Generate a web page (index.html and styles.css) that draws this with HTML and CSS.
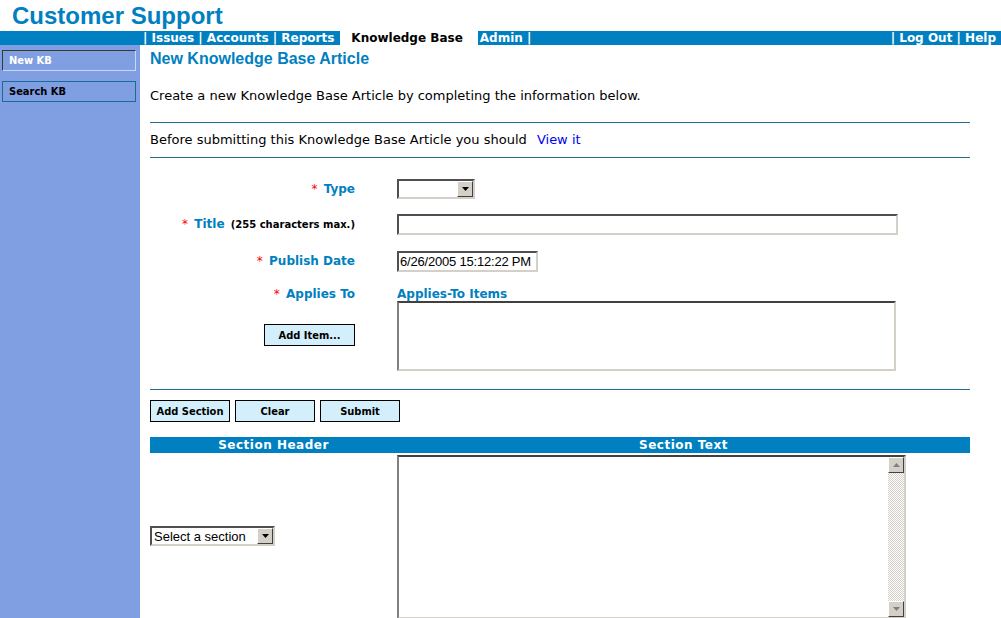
FILE: index.html
```html
<!DOCTYPE html>
<html>
<head>
<meta charset="utf-8">
<title>Customer Support</title>
<link rel="stylesheet" href="styles.css">
</head>
<body>
<header class="brand">Customer Support</header>
<nav class="topnav">
  <div class="nav-left">
    <span class="nav-item">| Issues | Accounts | Reports</span>
    <span class="nav-item nav-current">Knowledge Base</span>
    <span class="nav-item nav-admin">Admin |</span>
  </div>
  <div class="nav-right">
    <span class="nav-item">| Log Out | Help</span>
  </div>
</nav>
<div class="layout">
  <aside class="sidebar">
    <a class="side-btn side-active">New KB</a>
    <a class="side-btn">Search KB</a>
  </aside>
  <main class="content">
    <h1 class="page-title">New Knowledge Base Article</h1>
    <p class="intro">Create a new Knowledge Base Article by completing the information below.</p>
    <div class="rule rule-top"></div>
    <p class="notice">Before submitting this Knowledge Base Article you should <a class="link">View it</a></p>
    <div class="rule rule-mid"></div>

    <div class="form">
      <div class="label row-type"><span class="req">*</span> Type</div>
      <div class="control row-type">
        <span class="combo combo-type"><select class="combo-select"><option></option></select><span class="combo-btn"><svg width="7" height="4" viewBox="0 0 7 4"><path d="M0 0h7L3.5 4z" fill="#000"/></svg></span></span>
      </div>

      <div class="label row-title"><span class="req">*</span> Title <small class="hint">(255 characters max.)</small></div>
      <div class="control row-title"><input class="field field-title" type="text"></div>

      <div class="label row-date"><span class="req">*</span> Publish Date</div>
      <div class="control row-date"><input class="field field-date" type="text" value="6/26/2005 15:12:22 PM"></div>

      <div class="label label-applies"><span class="req">*</span> Applies To
        <button class="btn btn-add" type="button">Add Item...</button>
      </div>
      <div class="control applies">
        <div class="applies-head">Applies-To Items</div>
        <div class="listbox"></div>
      </div>
    </div>

    <div class="rule rule-low"></div>

    <div class="actions">
      <button class="btn btn-action" type="button">Add Section</button>
      <button class="btn btn-action" type="button">Clear</button>
      <button class="btn btn-action" type="button">Submit</button>
    </div>

    <div class="sections">
      <div class="sec-head">Section Header</div>
      <div class="sec-head">Section Text</div>
      <div class="sec-cell">
        <span class="combo combo-section"><select class="combo-select"><option>Select a section</option></select><span class="combo-btn"><svg width="7" height="4" viewBox="0 0 7 4"><path d="M0 0h7L3.5 4z" fill="#000"/></svg></span></span>
      </div>
      <div class="sec-text">
        <div class="memo">
          <textarea class="memo-area"></textarea>
          <div class="vscroll">
            <span class="sb-btn"><svg width="7" height="4" viewBox="0 0 7 4"><path d="M0 4h7L3.5 0z" fill="#808080"/></svg></span>
            <span class="sb-track"></span>
            <span class="sb-btn"><svg width="7" height="4" viewBox="0 0 7 4"><path d="M0 0h7L3.5 4z" fill="#808080"/></svg></span>
          </div>
        </div>
      </div>
    </div>
  </main>
</div>
</body>
</html>
```

FILE: styles.css
```css
html, body {
  margin: 0;
  padding: 0;
  background: #fff;
  overflow: hidden;
}
body {
  font-family: "DejaVu Sans", Verdana, sans-serif;
  font-size: 12px;
  color: #000;
  height: 618px;
}
.brand {
  height: 31px;
  line-height: 31px;
  padding-left: 12px;
  font-family: "Liberation Sans", Arial, sans-serif;
  font-weight: bold;
  font-size: 24px;
  color: #0080c0;
}
.topnav {
  height: 14px;
  background: #0080c0;
  display: flex;
  justify-content: space-between;
  color: #fff;
  font-weight: bold;
  font-size: 12px;
  line-height: 14px;
}
.nav-left {
  display: flex;
  padding-left: 143px;
}
.nav-item {
  white-space: pre;
}
.nav-current {
  background: #fff;
  color: #000;
  padding: 0 15px 0 11px;
  margin-left: 6px;
}
.nav-admin {
  margin-left: 2px;
}
.nav-right {
  padding-right: 5px;
}
.layout {
  display: flex;
  height: 573px;
}
.sidebar {
  width: 140px;
  flex: none;
  background: #7f9fe2;
  padding-top: 5px;
  box-sizing: border-box;
}
.side-btn {
  display: block;
  margin: 0 4px 10px 2px;
  height: 21px;
  line-height: 20px;
  box-sizing: border-box;
  padding-left: 6px;
  font-family: "DejaVu Sans Condensed", "DejaVu Sans", sans-serif;
  font-size: 11px;
  font-weight: bold;
  color: #000;
  border: 1px solid #1a6a9a;
}
.side-active {
  color: #fff;
  border-color: #c8d8f8;
  border-top-color: #3a3a2a;
  border-left-color: #3a3a2a;
}
.content {
  padding-left: 10px;
  width: 820px;
}
.page-title {
  margin: 4px 0 0;
  font-family: "Liberation Sans", Arial, sans-serif;
  font-size: 16px;
  line-height: 19px;
  color: #0080c0;
}
.intro {
  margin: 20px 0 0;
  font-size: 13px;
  line-height: 15px;
}
.rule {
  height: 1px;
  background: #1a7090;
}
.rule-top {
  margin-top: 19px;
}
.notice {
  margin: 9px 0 0;
  font-size: 13px;
  line-height: 15px;
}
.rule-mid {
  margin-top: 10px;
}
.link {
  color: #0000ee;
  margin-left: 6px;
}
.form {
  display: grid;
  grid-template-columns: 205px 1fr;
  column-gap: 42px;
  margin-top: 21px;
}
.label {
  text-align: right;
  font-weight: bold;
  color: #0080c0;
}
.req {
  color: #ff0000;
  font-weight: normal;
  margin-right: 2px;
}
.hint {
  font-size: 10px;
  color: #000;
  margin-left: 2px;
}
.row-type { height: 20px; line-height: 20px; }
.row-title { margin-top: 15px; height: 21px; line-height: 21px; }
.row-date { margin-top: 16px; height: 21px; line-height: 21px; }
.label-applies {
  margin-top: 15px;
  line-height: 14px;
}
.applies {
  margin-top: 15px;
}
.applies-head {
  font-weight: bold;
  color: #0080c0;
  line-height: 14px;
}
.combo {
  display: inline-flex;
  vertical-align: top;
  box-sizing: border-box;
  height: 20px;
  border: 2px solid;
  border-color: #505050 #d4d0c8 #d4d0c8 #505050;
  background: #fff;
}
.combo-type { width: 78px; }
.combo-section { width: 125px; }
.combo-select {
  appearance: none;
  -webkit-appearance: none;
  border: 0;
  outline: 0;
  background: #fff;
  flex: 1;
  min-width: 0;
  padding: 0 0 0 2px;
  margin: 0;
  font-family: "Liberation Sans", Arial, sans-serif;
  font-size: 13px;
  color: #000;
}
.combo-btn {
  width: 16px;
  flex: none;
  box-sizing: border-box;
  background: #d4d0c8;
  border: 1px solid;
  border-color: #ffffff #404040 #404040 #ffffff;
  display: flex;
  align-items: center;
  justify-content: center;
}
.field {
  display: block;
  box-sizing: border-box;
  height: 21px;
  border: 2px solid;
  border-color: #505050 #d4d0c8 #d4d0c8 #505050;
  padding: 0 1px;
  margin: 0;
  font-family: "Liberation Sans", Arial, sans-serif;
  font-size: 13px;
  letter-spacing: -0.2px;
  outline: 0;
}
.field-title { width: 501px; }
.field-date { width: 141px; }
.listbox {
  width: 499px;
  height: 70px;
  box-sizing: border-box;
  border: 2px solid;
  border-color: #404040 #d4d0c8 #d4d0c8 #808080;
  box-shadow: inset -1px -1px 0 #fff;
  background: #fff;
}
.btn {
  font-family: "DejaVu Sans Condensed", "DejaVu Sans", sans-serif;
  font-size: 11px;
  font-weight: bold;
  color: #000;
  background: #d4effc;
  border: 1px solid #000;
  height: 22px;
  padding: 0;
  margin: 0;
}
.btn-add {
  display: block;
  width: 91px;
  margin: 23px 0 0 auto;
}
.rule-low {
  margin-top: 18px;
}
.actions {
  display: flex;
  gap: 5px;
  margin-top: 10px;
}
.btn-action {
  width: 80px;
}
.sections {
  display: grid;
  grid-template-columns: 247px 573px;
  margin-top: 15px;
}
.sec-head {
  background: #0080c0;
  color: #fff;
  font-weight: bold;
  text-align: center;
  height: 16px;
  line-height: 16px;
  font-size: 12px;
  letter-spacing: 0.5px;
}
.sec-cell {
  display: flex;
  align-items: center;
}
.sec-text {
  padding-top: 2px;
}
.memo {
  display: flex;
  width: 509px;
  height: 164px;
  box-sizing: border-box;
  border: 2px solid;
  border-color: #404040 #d4d0c8 #d4d0c8 #808080;
  background: #fff;
}
.memo-area {
  flex: 1;
  border: 0;
  outline: 0;
  resize: none;
  margin: 0;
  padding: 0;
}
.vscroll {
  width: 16px;
  display: flex;
  flex-direction: column;
  background: repeating-conic-gradient(#d4d0c8 0 25%, #ffffff 0 50%) 0 0 / 2px 2px;
}
.sb-btn {
  height: 16px;
  flex: none;
  box-sizing: border-box;
  background: #d4d0c8;
  border: 1px solid;
  border-color: #ffffff #404040 #404040 #ffffff;
  display: flex;
  align-items: center;
  justify-content: center;
}
.sb-track { flex: 1; }
```
